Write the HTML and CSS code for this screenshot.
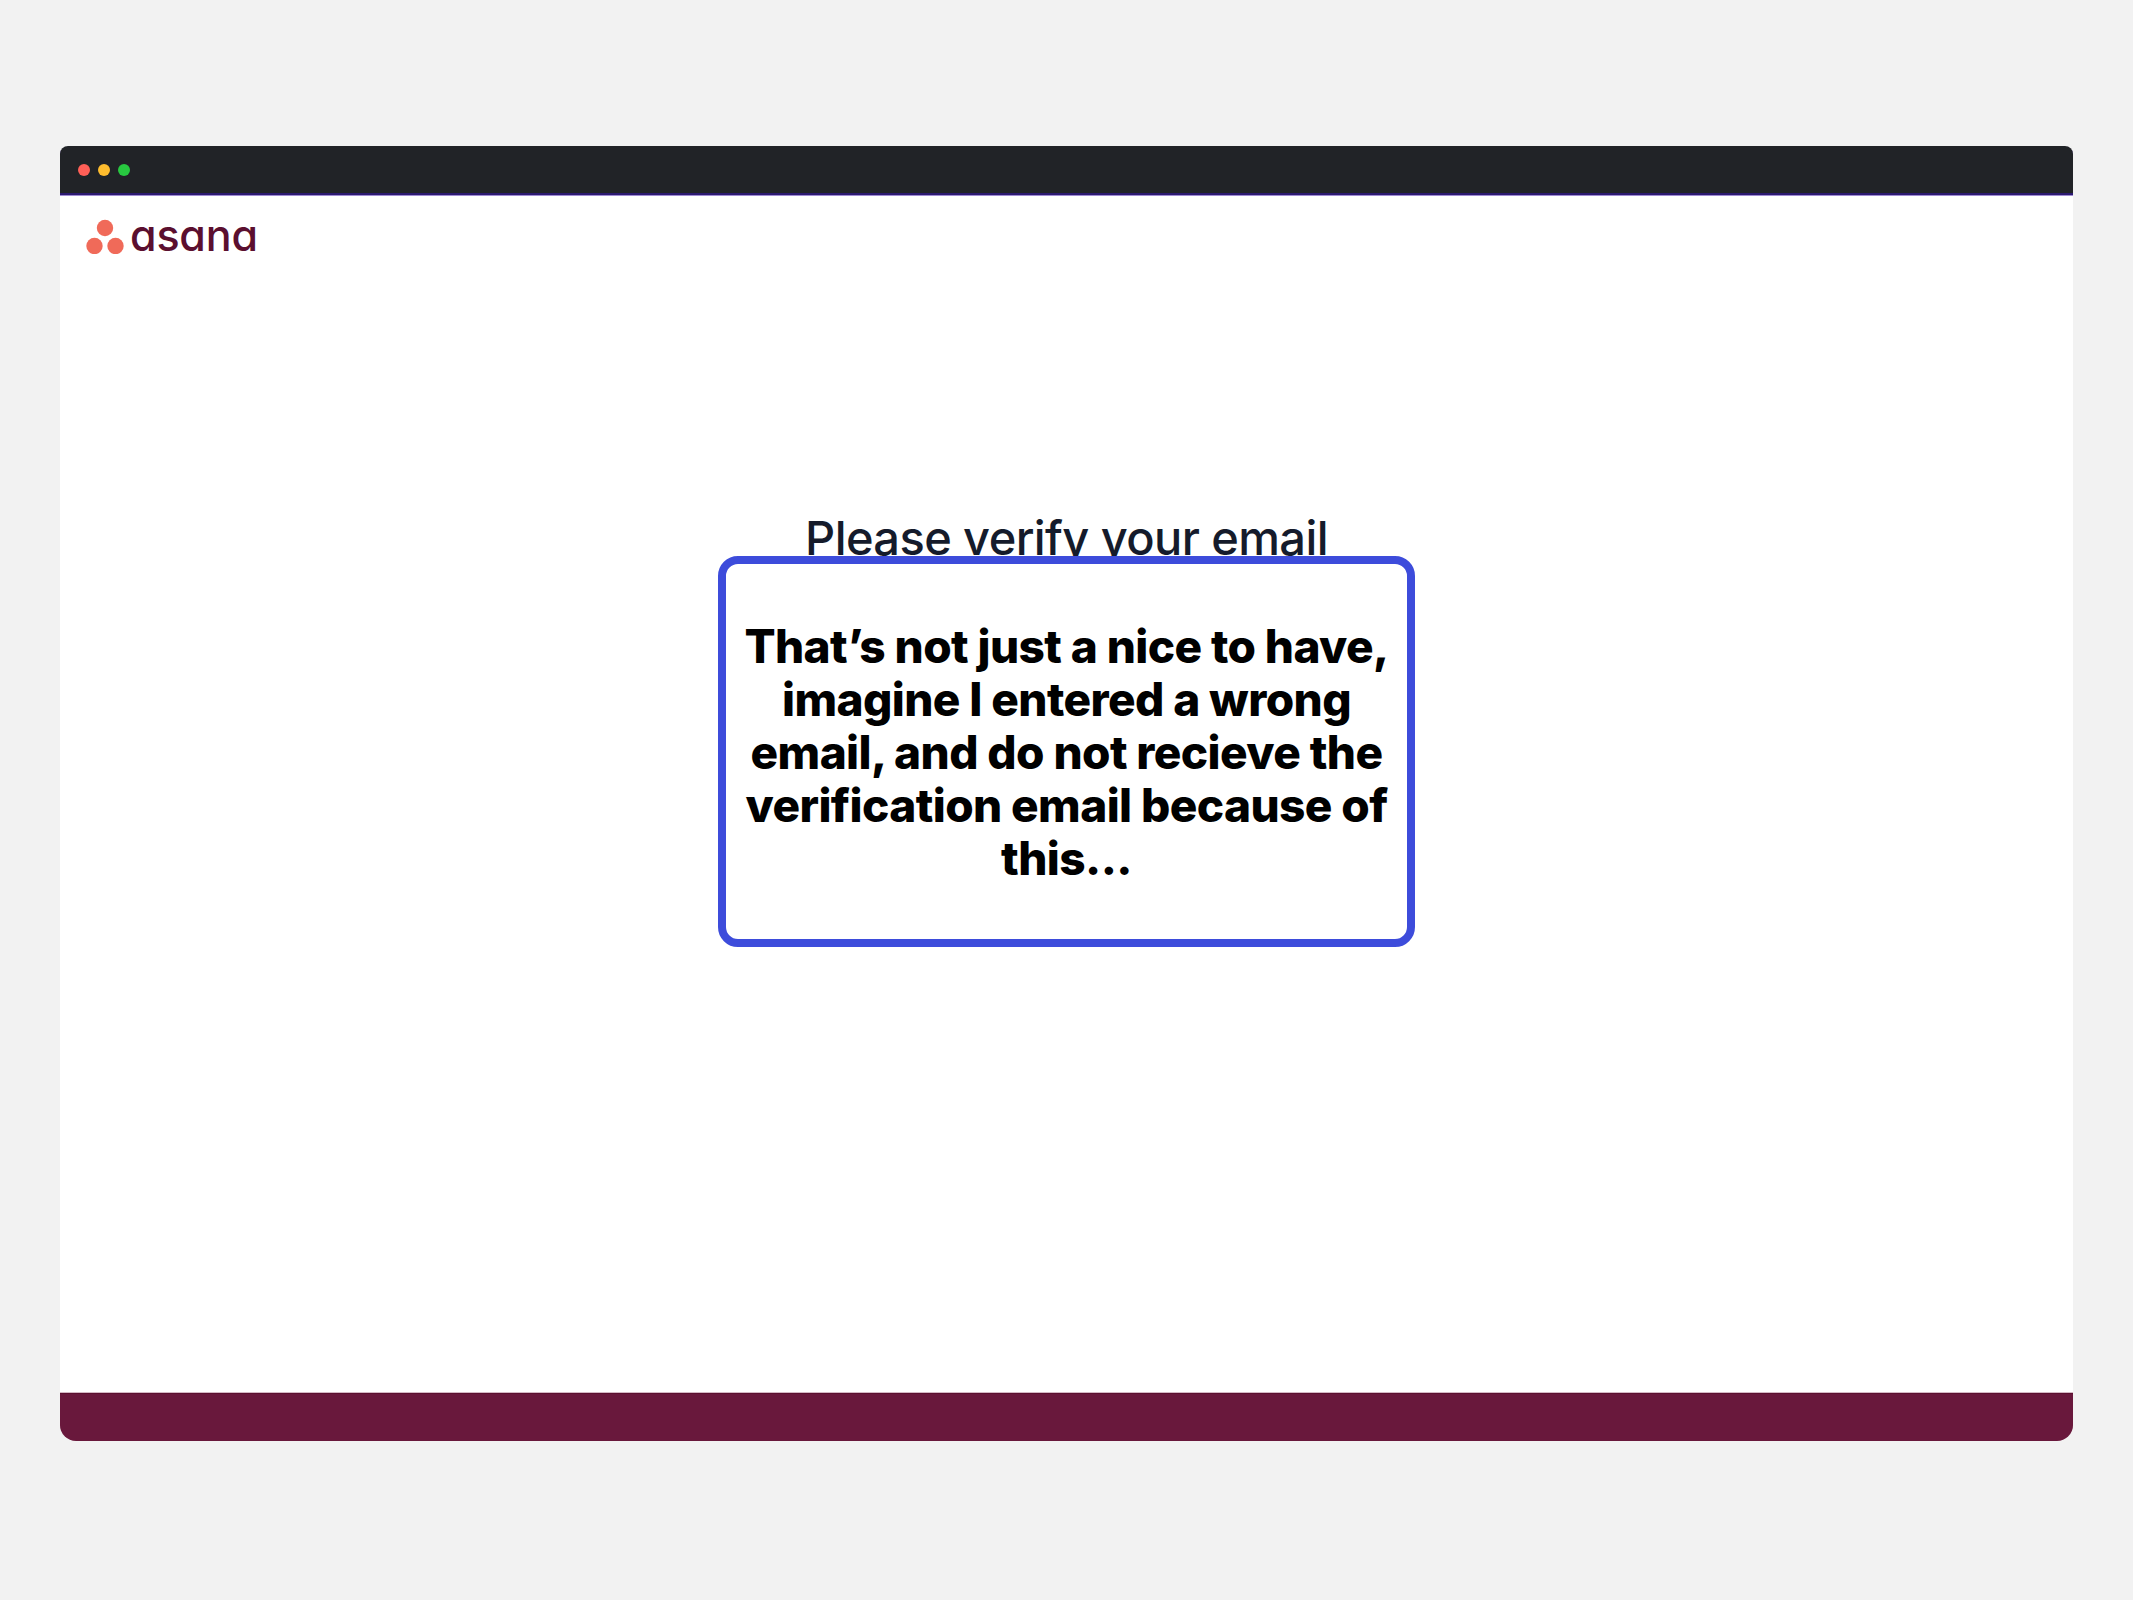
FILE: index.html
```html
<!DOCTYPE html>
<html lang="en">
<head>
    <meta charset="UTF-8">
    <meta name="viewport" content="width=device-width, initial-scale=1.0">
    <title>Please verify your email</title>
    <link rel="stylesheet" href="styles.css">
</head>
<body>
    <div class="window">
        <div class="titlebar">
            <span class="dot dot-red"></span>
            <span class="dot dot-yellow"></span>
            <span class="dot dot-green"></span>
        </div>
        <div class="content">
            <div class="logo">
                <svg class="logo-mark" width="38" height="38" viewBox="0 0 38 38">
                    <circle cx="19" cy="12" r="8.2" fill="#f06a59"/>
                    <circle cx="8.5" cy="30" r="8.2" fill="#f06a59"/>
                    <circle cx="29.5" cy="30" r="8.2" fill="#f06a59"/>
                </svg>
                <span class="logo-text">asana</span>
            </div>
            <h1 class="heading">Please verify your email</h1>
            <div class="note">
                <p>That’s not just a nice to have, imagine I entered a wrong email, and do not recieve the verification email because of this...</p>
            </div>
        </div>
        <div class="footer"></div>
    </div>
</body>
</html>
```

FILE: styles.css
```css
body {
    margin: 0;
    height: 1600px;
    padding: 146px 60px 0;
    box-sizing: border-box;
    background-color: #f2f2f2;
    font-family: Inter, "Liberation Sans", sans-serif;
}
.window {
    height: 1295px;
    display: flex;
    flex-direction: column;
    position: relative;
    border-radius: 8px 8px 16px 16px;
    overflow: hidden;
    background-color: #fff;
}
.titlebar {
    height: 47px;
    padding-left: 18px;
    display: flex;
    align-items: center;
    gap: 8px;
    background-color: #212327;
    border-bottom: 2px solid #2b1a70;
    box-shadow: 0 1px 0 #a08ad2;
}
.dot {
    width: 12px;
    height: 12px;
    border-radius: 50%;
}
.dot-red {
    background-color: #ff5f57;
}
.dot-yellow {
    background-color: #febc2e;
}
.dot-green {
    background-color: #28c840;
}
.content {
    flex: 1;
    padding: 21px 26px 0;
    display: flex;
    flex-direction: column;
}
.logo {
    display: flex;
    align-items: center;
    gap: 6px;
}
.logo-text {
    font-size: 43px;
    line-height: 36px;
    font-weight: 500;
    letter-spacing: -0.2px;
    color: #5b0f2f;
    font-feature-settings: "cv11";
}
.heading {
    margin: 256px 0 0;
    text-align: center;
    font-size: 47px;
    line-height: 56px;
    font-weight: 500;
    letter-spacing: -0.6px;
    color: #151b2b;
}
.note {
    position: absolute;
    left: 658px;
    top: 410px;
    width: 697px;
    height: 391px;
    box-sizing: border-box;
    border: 8px solid #3d4cdb;
    border-radius: 20px;
    background-color: #fff;
    display: flex;
    align-items: center;
    justify-content: center;
}
.note p {
    margin: 2px 0 0;
    width: 660px;
    text-align: center;
    font-size: 46px;
    line-height: 53px;
    font-weight: 800;
    letter-spacing: -0.6px;
    color: #000;
}
.footer {
    height: 47px;
    background-color: #69183c;
    border-top: 1px solid #5b0f2f;
    box-shadow: 0 -1px 0 #d4b8c4;
}
```
